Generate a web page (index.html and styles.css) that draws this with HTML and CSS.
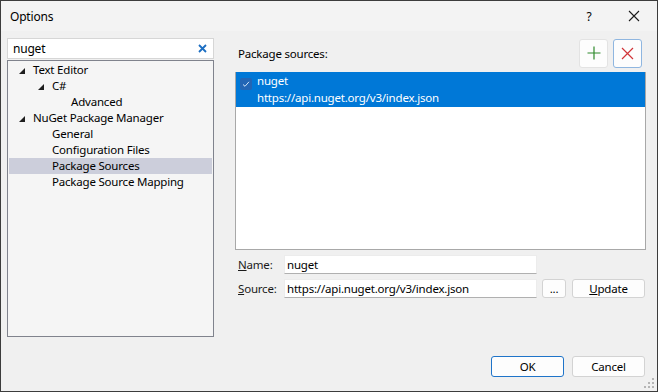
FILE: index.html
```html
<!DOCTYPE html>
<html lang="en">
<head>
  <meta charset="UTF-8">
  <meta name="viewport" content="width=device-width, initial-scale=1.0">
  <title>Options</title>
  <link rel="stylesheet" href="styles.css">
</head>
<body>
  <div class="window">
    <div class="titlebar">
      <span class="title">Options</span>
      <span class="help">?</span>
      <span class="close">
        <svg width="12" height="12" viewBox="0 0 12 12"><path d="M1 1 L11 11 M11 1 L1 11" stroke="#1a1a1a" stroke-width="1.1" fill="none"/></svg>
      </span>
    </div>

    <div class="main">
      <div class="left">
        <div class="search">
          <span class="search-text">nuget</span>
          <svg class="search-clear" width="9" height="9" viewBox="0 0 9 9"><path d="M1 1 L8 8 M8 1 L1 8" stroke="#1c6ec2" stroke-width="1.8" fill="none"/></svg>
        </div>
        <div class="tree">
          <div class="tree-row lvl0"><span class="arrow"><svg width="6" height="6" viewBox="0 0 6 6"><polygon points="6,0 6,6 0,6" fill="#1e1e1e"/></svg></span>Text Editor</div>
          <div class="tree-row lvl1"><span class="arrow"><svg width="6" height="6" viewBox="0 0 6 6"><polygon points="6,0 6,6 0,6" fill="#1e1e1e"/></svg></span>C#</div>
          <div class="tree-row lvl2"><span class="arrow"></span>Advanced</div>
          <div class="tree-row lvl0"><span class="arrow"><svg width="6" height="6" viewBox="0 0 6 6"><polygon points="6,0 6,6 0,6" fill="#1e1e1e"/></svg></span>NuGet Package Manager</div>
          <div class="tree-row lvl1"><span class="arrow"></span>General</div>
          <div class="tree-row lvl1"><span class="arrow"></span>Configuration Files</div>
          <div class="tree-row lvl1 selected"><span class="arrow"></span>Package Sources</div>
          <div class="tree-row lvl1"><span class="arrow"></span>Package Source Mapping</div>
        </div>
      </div>

      <div class="right">
        <div class="sources-header">
          <span class="sources-label">Package sources:</span>
          <button class="icon-btn">
            <svg width="14" height="14" viewBox="0 0 14 14"><path d="M7 0.5 V13.5 M0.5 7 H13.5" stroke="#2f8a2c" stroke-width="1.2" fill="none"/></svg>
          </button>
          <button class="icon-btn focused">
            <svg width="13" height="13" viewBox="0 0 13 13"><path d="M1 1 L12 12 M12 1 L1 12" stroke="#d13438" stroke-width="1.2" fill="none"/></svg>
          </button>
        </div>

        <div class="source-list">
          <div class="source-item">
            <span class="check">
              <svg width="8" height="8" viewBox="0 0 8 8"><path d="M1 4.5 L3 6.3 L7 1.8" stroke="#cfe2f8" stroke-width="1" fill="none"/></svg>
            </span>
            <div class="source-text">
              <div>nuget</div>
              <div>https://api.nuget.org/v3/index.json</div>
            </div>
          </div>
        </div>

        <div class="form-row">
          <label class="form-label"><u>N</u>ame:</label>
          <div class="text-input">nuget</div>
        </div>
        <div class="form-row">
          <label class="form-label"><u>S</u>ource:</label>
          <div class="text-input">https://api.nuget.org/v3/index.json</div>
          <button class="btn btn-dots">...</button>
          <button class="btn btn-update"><u>U</u>pdate</button>
        </div>
      </div>
    </div>

    <div class="footer">
      <button class="btn btn-dialog default">OK</button>
      <button class="btn btn-dialog">Cancel</button>
      <svg class="grip" width="10" height="10" viewBox="0 0 10 10">
        <rect x="8" y="0" width="2" height="2" fill="#b5b5b5"/>
        <rect x="4" y="4" width="2" height="2" fill="#b5b5b5"/>
        <rect x="8" y="4" width="2" height="2" fill="#b5b5b5"/>
        <rect x="0" y="8" width="2" height="2" fill="#b5b5b5"/>
        <rect x="4" y="8" width="2" height="2" fill="#b5b5b5"/>
        <rect x="8" y="8" width="2" height="2" fill="#b5b5b5"/>
      </svg>
    </div>
  </div>
</body>
</html>
```

FILE: styles.css
```css
body {
  margin: 0;
  font-family: "Noto Sans", "Open Sans", sans-serif;
  font-size: 11.5px;
  letter-spacing: -0.2px;
  color: #000;
}
.window {
  width: 656px;
  height: 390px;
  border: 1px solid #3c3c3c;
  background-color: #f0f0f0;
  display: flex;
  flex-direction: column;
}
.titlebar {
  height: 30px;
  flex: none;
  background-color: #f3f3f3;
  display: flex;
  align-items: center;
  padding-left: 9px;
  font-size: 12px;
}
.title {
  flex: 1;
}
.help {
  width: 12px;
  margin-right: 33px;
  text-align: center;
}
.close {
  width: 12px;
  height: 12px;
  margin-right: 17px;
  display: flex;
}
.main {
  flex: none;
  display: flex;
  gap: 21px;
  padding: 7px 11px 0 6px;
}
.left {
  width: 207px;
  flex: none;
}
.search {
  height: 19px;
  border: 1px solid #d6d6d6;
  background-color: #fff;
  display: flex;
  align-items: center;
  padding: 0 6px 0 5px;
  font-size: 12px;
}
.search-text {
  flex: 1;
}
.search-clear {
  display: block;
}
.tree {
  margin-top: 1px;
  height: 273px;
  border: 1px solid #80838d;
  background-color: #f5f5f5;
  padding: 1px;
}
.tree-row {
  height: 16px;
  line-height: 16px;
  display: flex;
  align-items: center;
  white-space: nowrap;
}
.tree-row.lvl0 { padding-left: 10px; }
.tree-row.lvl1 { padding-left: 29px; }
.tree-row.lvl2 { padding-left: 48px; }
.tree-row.selected {
  background-color: #cccedb;
}
.arrow {
  width: 14px;
  height: 16px;
  flex: none;
  display: flex;
  align-items: center;
}
.arrow svg {
  display: block;
  margin-top: 1px;
}
.right {
  width: 411px;
  flex: none;
}
.sources-header {
  height: 30px;
  display: flex;
  align-items: center;
}
.sources-label {
  flex: 1;
  padding-left: 3px;
  margin-top: 1px;
}
.icon-btn {
  width: 29px;
  height: 29px;
  padding: 0;
  border: 1px solid #e3e3e3;
  border-radius: 3px;
  background-color: #fdfdfd;
  display: flex;
  align-items: center;
  justify-content: center;
  margin-left: 5px;
}
.icon-btn.focused {
  border-color: #8fb6e0;
  margin-right: 4px;
}
.source-list {
  margin-top: 4px;
  height: 176px;
  border: 1px solid #a8a8a8;
  background-color: #fff;
}
.source-item {
  height: 35px;
  margin-top: -1px;
  background-color: #0078d7;
  color: #fff;
  display: flex;
  align-items: flex-start;
}
.check {
  width: 12px;
  height: 12px;
  margin: 6px 5px 0 4px;
  border-radius: 2px;
  background-color: #2265b5;
  display: flex;
  align-items: center;
  justify-content: center;
}
.source-text {
  line-height: 17px;
}
.form-row {
  display: flex;
  align-items: center;
  margin-top: 5px;
  height: 19px;
}
.form-label {
  width: 46px;
  padding-left: 3px;
  color: #1a1a1a;
}
.text-input {
  width: 247px;
  height: 17px;
  line-height: 17px;
  padding: 0 2px;
  background-color: #fff;
  border: 1px solid #ececec;
  border-bottom-color: #b0b0b0;
  white-space: nowrap;
}
.btn {
  font-family: inherit;
  font-size: 11.5px;
  letter-spacing: -0.2px;
  color: #000;
  background-color: #fdfdfd;
  border: 1px solid #d3d3d3;
  border-radius: 3px;
  padding: 0;
}
.btn-dots {
  width: 24px;
  height: 19px;
  margin-left: 5px;
  line-height: 10px;
}
.btn-update {
  width: 73px;
  height: 19px;
  margin-left: 6px;
}
.footer {
  flex: 1;
  display: flex;
  justify-content: flex-end;
  align-items: flex-start;
  gap: 8px;
  padding: 19px 12px 0 0;
  position: relative;
}
.btn-dialog {
  width: 73px;
  height: 21px;
}
.btn-dialog.default {
  border-color: #1f74c9;
}
.grip {
  position: absolute;
  right: 3px;
  bottom: 3px;
}
```
